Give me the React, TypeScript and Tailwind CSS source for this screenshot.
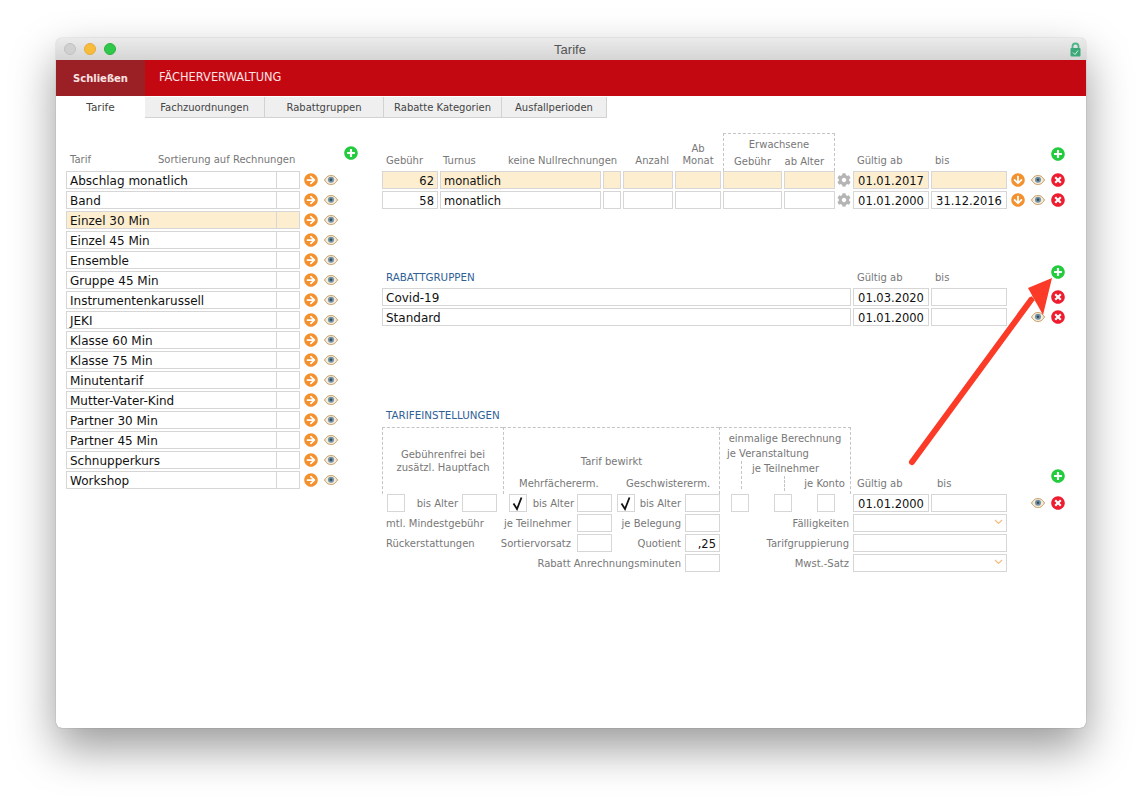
import React from "react";
import { FaArrowCircleDown, FaArrowCircleRight, FaCog, FaPlusCircle, FaTimesCircle } from "react-icons/fa";

const tarife = [
  "Abschlag monatlich",
  "Band",
  "Einzel 30 Min",
  "Einzel 45 Min",
  "Ensemble",
  "Gruppe 45 Min",
  "Instrumentenkarussell",
  "JEKI",
  "Klasse 60 Min",
  "Klasse 75 Min",
  "Minutentarif",
  "Mutter-Vater-Kind",
  "Partner 30 Min",
  "Partner 45 Min",
  "Schnupperkurs",
  "Workshop",
];

const Eye = () => (
  <svg width="14" height="10" viewBox="0 0 14 10" className="shrink-0">
    <path d="M0.5 5C3 1 5 0.5 7 0.5S11 1 13.5 5C11 9 9 9.5 7 9.5S3 9 0.5 5Z" fill="#f4ead8" stroke="#c79a5e" strokeWidth="1" />
    <circle cx="7" cy="4.8" r="3" fill="#6f8fa3" />
    <circle cx="7" cy="4.8" r="1.2" fill="#34495a" />
  </svg>
);

const Plus = () => <FaPlusCircle className="text-[#22cc3c] text-[14px] shrink-0" />;
const Cross = () => <FaTimesCircle className="text-[#ee1c2e] text-[14px] shrink-0" />;
const Right = () => <FaArrowCircleRight className="text-[#f4912f] text-[14px] shrink-0" />;
const Down = () => <FaArrowCircleDown className="text-[#f4912f] text-[14px] shrink-0" />;
const Gear = () => <FaCog className="text-[#b5b5b5] text-[14px] shrink-0" />;

const Field = ({ className = "", children }: { className?: string; children?: React.ReactNode }) => (
  <div className={`h-[18px] border border-[#d6d6d6] px-[3px] text-[12px] leading-[18px] text-[#111] whitespace-nowrap overflow-hidden shrink-0 ${className}`}>
    {children}
  </div>
);

const Label = ({ className = "", children }: { className?: string; children?: React.ReactNode }) => (
  <div className={`text-[10px] leading-[15px] text-[#777] whitespace-nowrap shrink-0 ${className}`}>{children}</div>
);

const Check = () => (
  <svg width="16" height="16" viewBox="0 0 16 16" className="mx-auto">
    <path d="M3.5 8.5L7 14L11.5 2.5" fill="none" stroke="#111" strokeWidth="1.8" />
  </svg>
);

const Chevron = () => (
  <svg width="9" height="6" viewBox="0 0 9 6" className="mt-[4px] ml-auto">
    <path d="M1 1L4.5 4.5L8 1" fill="none" stroke="#f3bd80" strokeWidth="1.2" />
  </svg>
);

const GebuehrRow = ({ amount, from, to, bg }: { amount: string; from: string; to?: string; bg: string }) => (
  <div className="flex items-center gap-[2px] mb-[2px]">
    <Field className={`w-[56px] text-right !text-[11.5px] ${bg}`}>{amount}</Field>
    <Field className={`w-[161px] !text-[11.5px] ${bg}`}>monatlich</Field>
    <Field className={`w-[18px] ${bg}`} />
    <Field className={`w-[50px] ${bg}`} />
    <Field className={`w-[46px] ${bg}`} />
    <Field className={`w-[59px] ${bg}`} />
    <Field className={`w-[51px] ${bg}`} />
    <div className="w-[14px] flex justify-center">
      <Gear />
    </div>
    <Field className={`w-[76px] text-center !text-[11.5px] ${bg}`}>{from}</Field>
    <Field className={`w-[76px] text-center !text-[11.5px] ${bg}`}>{to}</Field>
    <div className="ml-[2px] flex items-center gap-[6px]">
      <Down />
      <Eye />
      <Cross />
    </div>
  </div>
);

const RabattRow = ({ name, from }: { name: string; from: string }) => (
  <div className="flex items-center gap-[2px] mb-[2px]">
    <Field className="w-[469px]">{name}</Field>
    <Field className="w-[76px] text-center !text-[11.5px]">{from}</Field>
    <Field className="w-[76px]" />
    <div className="ml-[22px] flex items-center gap-[6px]">
      <Eye />
      <Cross />
    </div>
  </div>
);

const LeftColumn = () => (
  <div className="w-[316px] shrink-0">
    <div className="h-[53px] flex items-end pb-[4px] relative">
      <Label className="w-[92px] pl-[4px]">Tarif</Label>
      <Label>Sortierung auf Rechnungen</Label>
      <div className="ml-[49px] mb-[7px]">
        <Plus />
      </div>
    </div>
    {tarife.map((name) => {
      const active = name === "Einzel 30 Min";
      return (
        <div key={name} className="flex items-center mb-[2px]">
          <Field className={`w-[211px] ${active ? "bg-[#fdeecf]" : ""}`}>{name}</Field>
          <Field className={`w-[24px] -ml-px ${active ? "bg-[#fdeecf]" : ""}`} />
          <div className="ml-[4px] flex items-center gap-[6px]">
            <Right />
            <Eye />
          </div>
        </div>
      );
    })}
  </div>
);

const TarifSection = () => (
  <div>
    <div className="h-[53px] flex items-end">
      <Label className="w-[58px] pl-[4px] pb-[3px]">Gebühr</Label>
      <Label className="w-[68px] pl-[3px] pb-[3px]">Turnus</Label>
      <Label className="w-[115px] pb-[3px]">keine Nullrechnungen</Label>
      <Label className="w-[50px] text-right pr-[4px] pb-[3px]">Anzahl</Label>
      <Label className="w-[46px] ml-[2px] mr-[2px] text-center !leading-[12px] pb-[4px]">
        Ab
        <br />
        Monat
      </Label>
      <div className="w-[112px] h-[38px] border-t border-x border-dashed border-[#c4c4c4] text-center">
        <Label className="mt-[3px]">Erwachsene</Label>
        <div className="flex justify-between px-[10px] mt-[2px]">
          <Label>Gebühr</Label>
          <Label>ab Alter</Label>
        </div>
      </div>
      <Label className="w-[78px] ml-[18px] pl-[4px] pb-[3px]">Gültig ab</Label>
      <Label className="w-[120px] pl-[4px] pb-[3px]">bis</Label>
      <div className="mb-[10px]">
        <Plus />
      </div>
    </div>
    <GebuehrRow amount="62" from="01.01.2017" bg="bg-[#fdeecf]" />
    <GebuehrRow amount="58" from="01.01.2000" to="31.12.2016" bg="bg-white" />
  </div>
);

const RabattSection = () => (
  <div className="mt-[57px]">
    <div className="h-[22px] flex items-end pb-[3px]">
      <Label className="w-[471px] pl-[4px] !text-[#2f6197] !text-[10.3px]">RABATTGRUPPEN</Label>
      <Label className="w-[78px] pl-[4px]">Gültig ab</Label>
      <Label className="w-[120px] pl-[4px]">bis</Label>
      <div className="h-[20px]">
        <Plus />
      </div>
    </div>
    <RabattRow name="Covid-19" from="01.03.2020" />
    <RabattRow name="Standard" from="01.01.2000" />
  </div>
);

const SettingsHead = () => (
  <div className="flex h-[67px]">
    <div className="w-[121px] shrink-0 border-t border-l border-dashed border-[#c4c4c4] text-center pt-[20px]">
      <Label className="!leading-[13px]">
        Gebührenfrei bei
        <br />
        zusätzl. Hauptfach
      </Label>
    </div>
    <div className="w-[216px] shrink-0 border-t border-l border-dashed border-[#c4c4c4] pt-[26px]">
      <Label className="text-center">Tarif bewirkt</Label>
      <div className="flex mt-[7px]">
        <Label className="w-[108px] pl-[15px]">Mehrfächererm.</Label>
        <Label className="pl-[14px]">Geschwistererm.</Label>
      </div>
    </div>
    <div className="w-[132px] shrink-0 border-t border-x border-dashed border-[#c4c4c4] flex flex-col">
      <Label className="text-center mt-[3px]">einmalige Berechnung</Label>
      <Label className="pl-[7px]">je Veranstaltung</Label>
      <div className="ml-[21px] flex-1 border-l border-dashed border-[#c4c4c4] h-[26px] mb-[5px]">
        <Label className="pl-[10px]">je Teilnehmer</Label>
        <div className="ml-[42px] h-[15px] border-l border-dashed border-[#c4c4c4]">
          <Label className="text-right pr-[5px]">je Konto</Label>
        </div>
      </div>
    </div>
    <div className="flex items-end pb-[3px]">
      <Label className="w-[80px] pl-[6px]">Gültig ab</Label>
      <Label className="w-[120px] pl-[6px]">bis</Label>
      <div className="mb-[8px]">
        <Plus />
      </div>
    </div>
  </div>
);

const SettingsSection = () => (
  <div className="mt-[82px]">
    <div className="h-[19px] pl-[4px]">
      <Label className="!text-[#2f6197] !text-[10.3px]">TARIFEINSTELLUNGEN</Label>
    </div>
    <SettingsHead />

    <div className="flex items-center mb-[2px]">
      <Field className="w-[18px] ml-[5px]" />
      <Label className="w-[57px] text-right pr-[4px]">bis Alter</Label>
      <Field className="w-[35px]" />
      <Field className="w-[18px] ml-[12px] !px-0">
        <Check />
      </Field>
      <Label className="w-[50px] text-right pr-[3px]">bis Alter</Label>
      <Field className="w-[35px]" />
      <Field className="w-[18px] ml-[5px] !px-0">
        <Check />
      </Field>
      <Label className="w-[50px] text-right pr-[4px]">bis Alter</Label>
      <Field className="w-[35px]" />
      <Field className="w-[18px] ml-[11px]" />
      <Field className="w-[18px] ml-[25px]" />
      <Field className="w-[18px] ml-[25px]" />
      <Field className="w-[76px] ml-[18px] text-center !text-[11.5px]">01.01.2000</Field>
      <Field className="w-[76px] ml-[2px]" />
      <div className="ml-[24px] flex items-center gap-[6px]">
        <Eye />
        <Cross />
      </div>
    </div>

    <div className="flex items-center mb-[2px]">
      <Label className="w-[192px] text-right pr-[3px] relative">
        <span className="absolute left-[4px]">mtl. Mindestgebühr</span>
        je Teilnehmer
      </Label>
      <div className="w-[3px]" />
      <Field className="w-[35px]" />
      <Label className="w-[73px] text-right pr-[4px]">je Belegung</Label>
      <Field className="w-[35px]" />
      <Label className="w-[133px] text-right pr-[4px]">Fälligkeiten</Label>
      <Field className="w-[154px]">
        <Chevron />
      </Field>
    </div>

    <div className="flex items-center mb-[2px]">
      <Label className="w-[192px] text-right pr-[3px] relative">
        <span className="absolute left-[4px]">Rückerstattungen</span>
        Sortiervorsatz
      </Label>
      <div className="w-[3px]" />
      <Field className="w-[35px]" />
      <Label className="w-[73px] text-right pr-[4px]">Quotient</Label>
      <Field className="w-[35px] text-right !text-[11.5px]">,25</Field>
      <Label className="w-[133px] text-right pr-[4px]">Tarifgruppierung</Label>
      <Field className="w-[154px]" />
    </div>

    <div className="flex items-center">
      <Label className="w-[303px] text-right pr-[4px]">Rabatt Anrechnungsminuten</Label>
      <Field className="w-[35px]" />
      <Label className="w-[133px] text-right pr-[4px]">Mwst.-Satz</Label>
      <Field className="w-[154px]">
        <Chevron />
      </Field>
    </div>
  </div>
);

export default function App() {
  const tabs = [
    { name: "Fachzuordnungen", w: "w-[120px]" },
    { name: "Rabattgruppen", w: "w-[119px]" },
    { name: "Rabatte Kategorien", w: "w-[118px]" },
    { name: "Ausfallperioden", w: "w-[105px]" },
  ];

  return (
    <div className="w-[1142px] h-[802px] bg-white pl-[56px] pt-[38px] overflow-hidden font-['DejaVu_Sans',sans-serif]">
      <div className="w-[1030px] h-[690px] bg-white rounded-[6px] relative shadow-[0_0_1px_rgba(0,0,0,0.5),0_20px_45px_rgba(0,0,0,0.4)] overflow-hidden flex flex-col">
        {/* title bar */}
        <div className="h-[22px] shrink-0 bg-gradient-to-b from-[#ebebeb] to-[#d5d5d5] flex items-center px-[8px] relative">
          <div className="flex gap-[8px]">
            <span className="w-[12px] h-[12px] rounded-full bg-[#d0d0d0] border border-[#c0c0c0]" />
            <span className="w-[12px] h-[12px] rounded-full bg-[#f8bc3b] border border-[#e8a93a]" />
            <span className="w-[12px] h-[12px] rounded-full bg-[#2fc84a] border border-[#2bb140]" />
          </div>
          <div className="flex-1 text-center text-[13px] text-[#555] font-['Liberation_Sans',sans-serif] pr-[46px] pt-px">Tarife</div>
          <svg width="11" height="15" viewBox="0 0 11 15" className="-mr-[3px]">
            <path d="M2.5 7V4.5a3 3 0 016 0V7" fill="none" stroke="#4db58a" strokeWidth="1.8" />
            <rect x="0.5" y="6" width="10" height="8.5" rx="1" fill="#3aa877" />
            <path d="M3 10.5L5 12.5L8 8.5" fill="none" stroke="#d7f0e4" strokeWidth="1" />
          </svg>
        </div>

        {/* red bar */}
        <div className="h-[36px] shrink-0 bg-[#c40812] flex items-center text-[11.4px] text-[#fbe3e3]">
          <div className="w-[89px] h-full bg-[#9b2026] flex items-center justify-center font-bold text-[10px]">Schließen</div>
          <div className="pl-[14px]">FÄCHERVERWALTUNG</div>
        </div>

        {/* tabs */}
        <div className="h-[22px] shrink-0 flex text-[10px] text-[#444] pt-px">
          <div className="w-[89px] flex items-center justify-center text-[10.5px]">Tarife</div>
          {tabs.map((t) => (
            <div key={t.name} className={`${t.w} bg-[#efefef] border-b border-r border-[#d2d2d2] first:border-l flex items-center justify-center`}>
              {t.name}
            </div>
          ))}
        </div>

        {/* form */}
        <div className="flex-1 flex pl-[10px]">
          <LeftColumn />
          <div className="flex-1">
            <TarifSection />
            <RabattSection />
            <SettingsSection />
          </div>
        </div>

        {/* annotation arrow */}
        <svg width="1030" height="690" viewBox="0 0 1030 690" className="absolute left-0 top-0 pointer-events-none">
          <path d="M856 424L975 262" stroke="#fb3a28" strokeWidth="6" strokeLinecap="round" fill="none" />
          <path d="M996 240L972 250L987 277Z" fill="#fb3a28" />
        </svg>
      </div>
    </div>
  );
}
